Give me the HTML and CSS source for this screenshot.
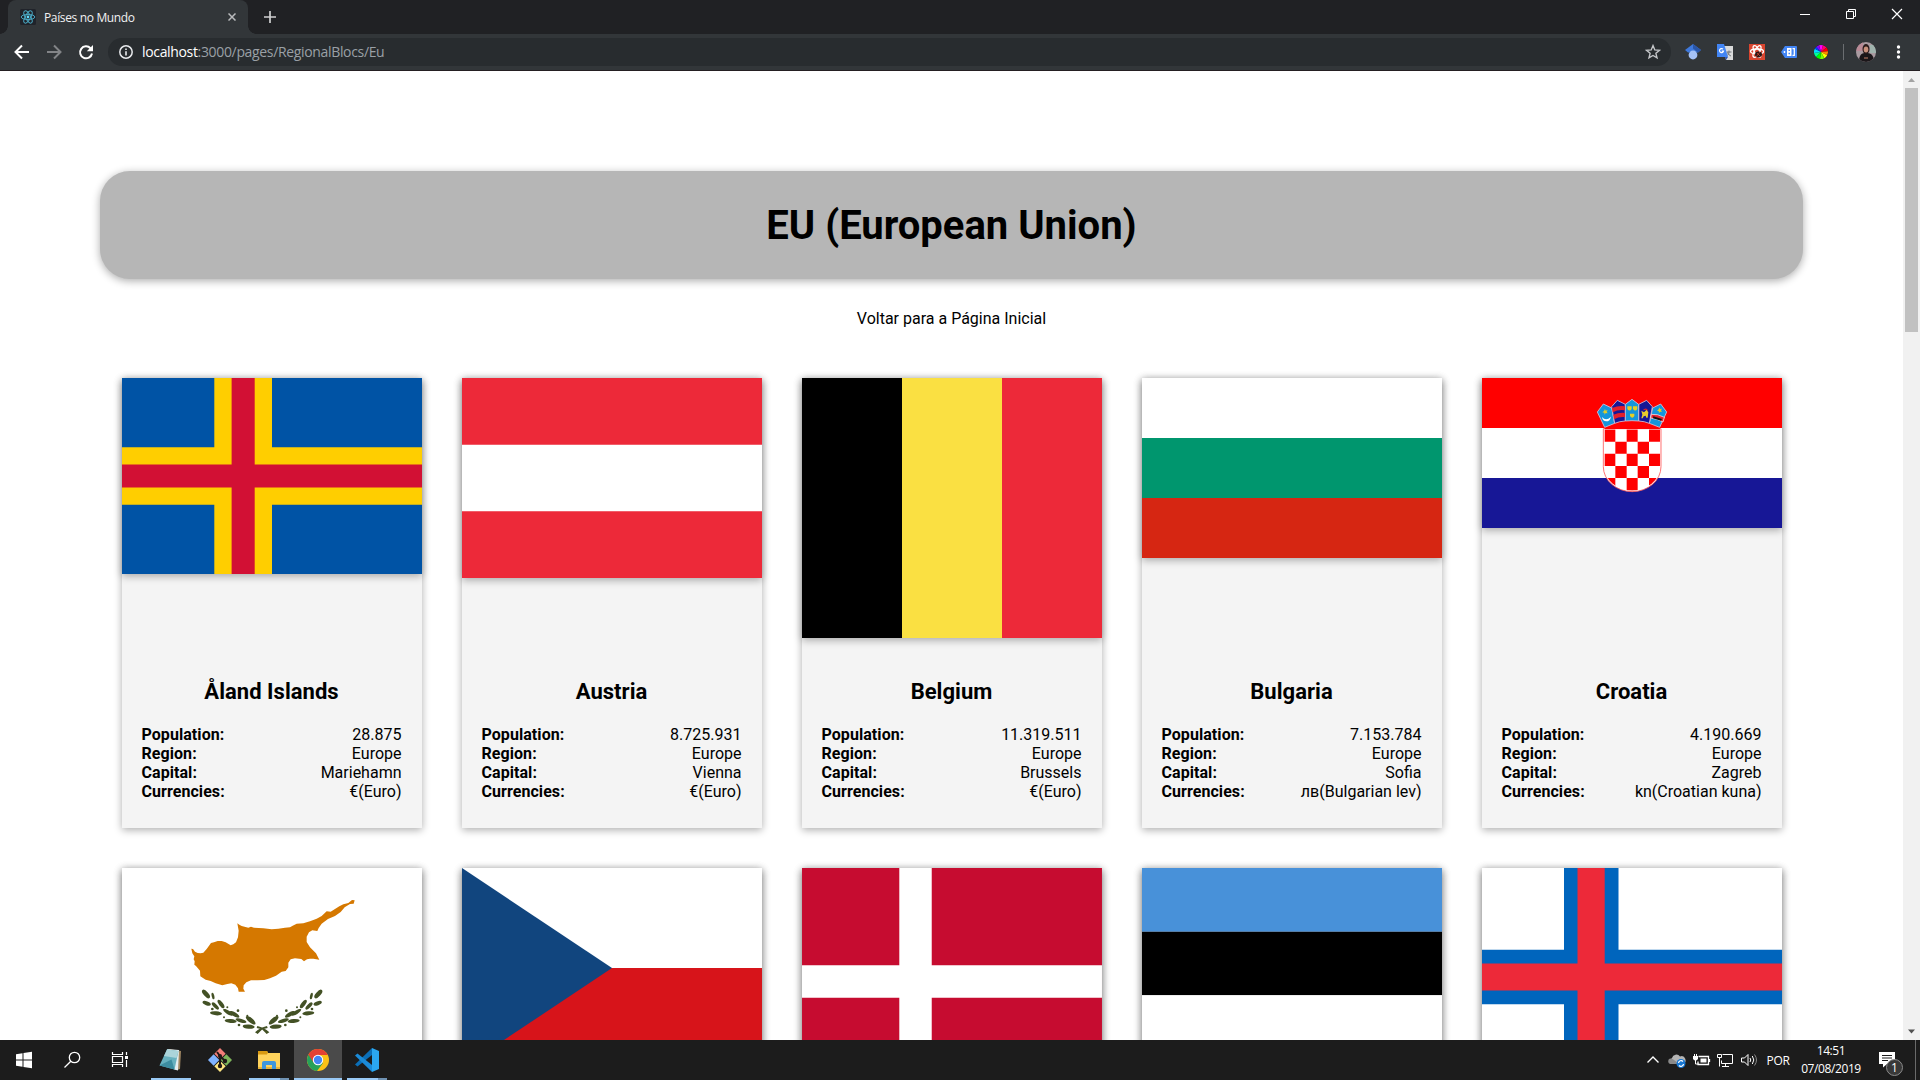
FILE: index.html
```html
<!DOCTYPE html>
<html lang="pt">
<head>
<meta charset="utf-8">
<title>Países no Mundo</title>
<link rel="stylesheet" href="styles.css">
</head>
<body>
<header class="tabstrip">
  <div class="tab">
    <svg class="favicon" width="16" height="16" viewBox="0 0 16 16"><rect width="16" height="16" rx="1.5" fill="#20232a"/><g fill="none" stroke="#4aa9c4" stroke-width="1"><ellipse cx="8" cy="8" rx="6.8" ry="2.6"/><ellipse cx="8" cy="8" rx="6.8" ry="2.6" transform="rotate(60 8 8)"/><ellipse cx="8" cy="8" rx="6.8" ry="2.6" transform="rotate(120 8 8)"/></g><circle cx="8" cy="8" r="1.4" fill="#61dafb"/></svg>
    <span class="tab-title">Países no Mundo</span>
    <svg class="tab-close" width="8" height="8" viewBox="0 0 8 8"><path d="M.5.5l7 7M7.500.5l-7 7" stroke="#b9bbbd" stroke-width="1.5"/></svg>
  </div>
  <svg class="new-tab" width="12" height="12" viewBox="0 0 12 12"><path d="M6 0v12M0 6h12" stroke="#cfd0d1" stroke-width="1.7"/></svg>
  <div class="window-controls">
    <svg width="46" height="28" viewBox="0 0 46 28"><path d="M18 14.500h10" stroke="#fff"/></svg>
    <svg width="46" height="28" viewBox="0 0 46 28"><path d="M18.500 11.500h7v7h-7zM20.500 11.500v-2h7v7h-2" fill="none" stroke="#fff"/></svg>
    <svg width="46" height="28" viewBox="0 0 46 28"><path d="M18 9l10 10M28 9L18 19" stroke="#fff" stroke-width="1.200"/></svg>
  </div>
</header>
<nav class="toolbar">
  <svg width="32" height="28" viewBox="0 0 32 28"><path d="M23 14H10M16 7.500L9.500 14l6.500 6.500" fill="none" stroke="#fff" stroke-width="2"/></svg>
  <svg width="32" height="28" viewBox="0 0 32 28"><path d="M9 14h13M16 7.500l6.500 6.500-6.500 6.500" fill="none" stroke="#828487" stroke-width="2"/></svg>
  <svg width="32" height="28" viewBox="0 0 32 28"><path d="M20.500 10.200A6 6 0 1 0 22 15.500" fill="none" stroke="#fff" stroke-width="2"/><path d="M23 7v6.200h-6.200z" fill="#fff"/></svg>
  <div class="omnibox">
    <svg width="14" height="14" viewBox="0 0 14 14"><circle cx="7" cy="7" r="6.200" fill="none" stroke="#e8eaed" stroke-width="1.500"/><path d="M7 6.200v4.300M7 3.500v1.600" stroke="#e8eaed" stroke-width="1.600"/></svg>
    <span class="url"><b>localhost</b>:3000/pages/RegionalBlocs/Eu</span>
    <svg class="star" width="16" height="16" viewBox="0 0 16 16"><path d="M8 1.600l1.800 4.300 4.700.4-3.600 3 1.100 4.600L8 11.500l-4 2.400 1.100-4.600-3.600-3 4.700-.4z" fill="none" stroke="#c4c6c9" stroke-width="1.400"/></svg>
  </div>
  <div class="extensions">
    <svg width="16" height="16" viewBox="0 0 16 16"><path d="M8 0l8 6-3 2.500H3L0 6z" fill="#3f79dc"/><path d="M8 0l8 6-3 2.500-5-4z" fill="#2a56a8"/><circle cx="8" cy="11" r="4.400" fill="#a5c2f7"/></svg>
    <svg width="16" height="16" viewBox="0 0 16 16"><path d="M6 2h10v14H9z" fill="#d9dadb"/><path d="M9.500 8h5M12 6.500V8c0 2-1.500 3.500-2.500 4M10.500 8.500c.5 2 2.500 3 3.500 3.500" stroke="#6e7378" fill="none"/><path d="M0 0h7l4 13H0z" fill="#4285f4"/><path d="M8 13h3l-2 3z" fill="#2c55b5"/><path d="M6 5.200A2 2 0 1 0 6.500 7H4.700" fill="none" stroke="#fff" stroke-width="1.200"/></svg>
    <svg width="16" height="16" viewBox="0 0 16 16"><rect width="16" height="16" fill="#d9452f"/><g fill="none" stroke="#fff" stroke-width="1.300"><ellipse cx="8" cy="7.500" rx="6.500" ry="2.500"/><ellipse cx="8" cy="7.500" rx="6.500" ry="2.500" transform="rotate(60 8 7.500)"/><ellipse cx="8" cy="7.500" rx="6.500" ry="2.500" transform="rotate(120 8 7.500)"/></g><ellipse cx="9.500" cy="10.500" rx="3.500" ry="3" fill="#2a1614"/><path d="M8 9l4 4M11 8l-4 5" stroke="#d9452f" stroke-width=".7"/></svg>
    <svg width="16" height="16" viewBox="0 0 16 16"><path d="M0 8l4-6h11q1 0 1 1v10q0 1-1 1H4z" fill="#4285f4"/><path d="M6 4h4.500v8H6z" fill="#fff"/><path d="M7.500 5.700H9v1.400H7.500zM7.500 8.700H9v1.500H7.500z" fill="#4285f4"/><path d="M11.500 4.700h1.800v6.600h-1.800" fill="none" stroke="#fff" stroke-width="1.300"/><circle cx="3.500" cy="8" r=".9" fill="#fff"/></svg>
    <svg width="16" height="16" viewBox="-8 -8 16 16"><circle r="7.200" fill="#15171a"/><path d="M0 0L-2-6.800A7 7 0 0 1 2-6.800z" fill="#f0f"/><path d="M0 0L2-6.800A7 7 0 0 1 5.500-4.400z" fill="#f07"/><path d="M0 0L5.500-4.400A7 7 0 0 1 7-.7z" fill="#f00"/><path d="M0 0L7-.7A7 7 0 0 1 6.200 3.300z" fill="#f80"/><path d="M0 0L6.200 3.300A7 7 0 0 1 3.300 6.200z" fill="#ff0"/><path d="M0 0L3.300 6.200A7 7 0 0 1-1 7z" fill="#7f0"/><path d="M0 0L-1 7A7 7 0 0 1-5 5z" fill="#0f0"/><path d="M0 0L-5 5A7 7 0 0 1-7 1z" fill="#0f9"/><path d="M0 0L-7 1A7 7 0 0 1-6.200-3.300z" fill="#0df"/><path d="M0 0L-6.200-3.300A7 7 0 0 1-4.700-5.200z" fill="#04f"/><path d="M0 0L-4.700-5.200A7 7 0 0 1-2-6.800z" fill="#80f"/></svg>
  </div>
  <span class="divider"></span>
  <svg class="avatar" width="20" height="20" viewBox="0 0 20 20"><defs><clipPath id="round"><circle cx="10" cy="10" r="10"/></clipPath></defs><g clip-path="url(#round)"><path d="M0 0h20v20H0z" fill="#a99aa0"/><path d="M0 0h7v9H0z" fill="#b98a96"/><path d="M14 3h6v8h-6z" fill="#9fb3ad"/><path d="M3 20c0-8 3-9 7-9s8 1 8 9z" fill="#1b1619"/><ellipse cx="10" cy="7" rx="3.500" ry="5" fill="#2a1a1a"/><ellipse cx="10" cy="7.500" rx="2.300" ry="3" fill="#c9917c"/><path d="M8 15h4v2H8z" fill="#6f4a40"/></g></svg>
  <svg width="20" height="20" viewBox="0 0 20 20" fill="#fff"><circle cx="10.500" cy="5" r="1.700"/><circle cx="10.500" cy="10" r="1.700"/><circle cx="10.500" cy="15" r="1.700"/></svg>
</nav>
<div class="viewport">
  <main class="page">
    <h1 class="title">EU (European Union)</h1>
    <a class="back">Voltar para a Página Inicial</a>
    <section class="cards">
      <article class="card">
        <svg class="flag" width="300" height="196" viewBox="0 0 26 17" preserveAspectRatio="none"><path fill="#0053a5" d="M0 0h26v17H0z"/><path fill="#ffce00" d="M8 0h5v17H8zM0 6h26v5H0z"/><path fill="#d21034" d="M9.500 0h2v17h-2zM0 7.500h26v2H0z"/></svg>
        <div class="info"><h2>Åland Islands</h2><dl><dt>Population:</dt><dd>28.875</dd><dt>Region:</dt><dd>Europe</dd><dt>Capital:</dt><dd>Mariehamn</dd><dt>Currencies:</dt><dd>€(Euro)</dd></dl></div>
      </article>
      <article class="card">
        <svg class="flag" width="300" height="200" viewBox="0 0 3 3" preserveAspectRatio="none"><path fill="#ed2939" d="M0 0h3v3H0z"/><path fill="#fff" d="M0 1h3v1H0z"/></svg>
        <div class="info"><h2>Austria</h2><dl><dt>Population:</dt><dd>8.725.931</dd><dt>Region:</dt><dd>Europe</dd><dt>Capital:</dt><dd>Vienna</dd><dt>Currencies:</dt><dd>€(Euro)</dd></dl></div>
      </article>
      <article class="card">
        <svg class="flag" width="300" height="260" viewBox="0 0 3 3" preserveAspectRatio="none"><path d="M0 0h1v3H0z"/><path fill="#fae042" d="M1 0h1v3H1z"/><path fill="#ed2939" d="M2 0h1v3H2z"/></svg>
        <div class="info"><h2>Belgium</h2><dl><dt>Population:</dt><dd>11.319.511</dd><dt>Region:</dt><dd>Europe</dd><dt>Capital:</dt><dd>Brussels</dd><dt>Currencies:</dt><dd>€(Euro)</dd></dl></div>
      </article>
      <article class="card">
        <svg class="flag" width="300" height="180" viewBox="0 0 3 3" preserveAspectRatio="none"><path fill="#fff" d="M0 0h3v1H0z"/><path fill="#00966e" d="M0 1h3v1H0z"/><path fill="#d62612" d="M0 2h3v1H0z"/></svg>
        <div class="info"><h2>Bulgaria</h2><dl><dt>Population:</dt><dd>7.153.784</dd><dt>Region:</dt><dd>Europe</dd><dt>Capital:</dt><dd>Sofia</dd><dt>Currencies:</dt><dd>лв(Bulgarian lev)</dd></dl></div>
      </article>
      <article class="card">
        <svg class="flag" width="300" height="150" viewBox="0 0 300 150"><path fill="red" d="M0 0h300v50H0z"/><path fill="#fff" d="M0 50h300v50H0z"/><path fill="#171796" d="M0 100h300v50H0z"/>
          <defs><clipPath id="shield"><path d="M133 178h167v111a83.500 73 0 0 1-167 0z"/></clipPath></defs>
          <g transform="translate(78 -8) scale(.33333)">
            <path d="M130 176h173v114a86.500 75 0 0 1-173 0z" fill="#fff" stroke="#f55" stroke-width="2.500"/>
            <g clip-path="url(#shield)"><path fill="red" d="M133 178h33v37h-33zM200 178h33v37h-33zM267 178h33v37h-33zM166 215h34v36h-34zM233 215h34v36h-34zM133 251h33v37h-33zM200 251h33v37h-33zM267 251h33v37h-33zM166 288h34v36h-34zM233 288h34v36h-34zM133 324h33v38h-33zM200 324h33v38h-33zM267 324h33v38h-33z"/></g>
            <path d="M133 172q83-33 168 0l-2 5H134z" fill="red"/>
            <g stroke="#d3c4dc" stroke-width="2.500" stroke-linejoin="round">
              <path d="M112 126l18-24 25 12 9 46-30 12z" fill="#1596dc"/>
              <path d="M320 126l-18-24-24 12-10 46 31 12z" fill="#1596dc"/>
              <path d="M155 110l17-19 24 12v50q-18 1-32 7z" fill="#171796"/>
              <path d="M277 110l-17-19-24 12v50q18 1 32 7z" fill="#171796"/>
              <path d="M196 103l20-15 20 15v50q-20-2-40 0z" fill="#1596dc"/>
            </g>
            <path d="M156 114q20-8 39-5v12q-20-3-37 6zM160 134q18-7 35-5v12q-18-2-33 7z" fill="#e3202c"/>
            <path d="M135 117l2 5 6-2-3 5 3 5-6-1-3 5-1-6-6-1 5-4zM298 112l2 5 6-1-3 5 3 4-6 0-3 4-1-6-5-1 5-4zM202 109h13v8q-6 9-13 0zM219 109h13v8q-6 9-13 0zM210 131h13v7q-6 10-13 0z" fill="#e5cf25"/>
            <path d="M126 141q12 14 27-1-3 14-14 14t-13-13z" fill="#fff"/>
            <path d="M244 122l8 5 8-8 5 8-2 16h-4l-2-6-6 2-3 6h-4l3-11z" fill="#e9cb2e"/><path d="M248 121q10-12 17 1l-7-3z" fill="#e3202c"/>
            <path d="M274 133q18-2 39 9l-4 14q-16-9-37-12z" fill="#e3202c" stroke="#fff" stroke-width="2"/><path d="M280 139l26 8-3 5-24-7z" fill="#111"/>
          </g></svg>
        <div class="info"><h2>Croatia</h2><dl><dt>Population:</dt><dd>4.190.669</dd><dt>Region:</dt><dd>Europe</dd><dt>Capital:</dt><dd>Zagreb</dd><dt>Currencies:</dt><dd>kn(Croatian kuna)</dd></dl></div>
      </article>
      <article class="card">
        <svg class="flag" width="300" height="180" viewBox="0 0 300 180"><path fill="#fff" d="M0 0h300v180H0z"/>
          <defs><g id="branch" fill="#435125"><ellipse cx="108" cy="402" rx="16" ry="7" transform="rotate(48 108 402)"/><ellipse cx="129" cy="408" rx="10" ry="4" transform="rotate(78 129 408)"/><ellipse cx="110" cy="430" rx="13" ry="6" transform="rotate(20 110 430)"/><ellipse cx="136" cy="438" rx="14" ry="5.500" transform="rotate(45 136 438)"/><ellipse cx="153" cy="432" rx="15" ry="6" transform="rotate(53 153 432)"/><ellipse cx="138" cy="460" rx="18" ry="6" transform="rotate(5 138 460)"/><ellipse cx="174" cy="457" rx="17" ry="5.500" transform="rotate(32 174 457)"/><ellipse cx="193" cy="463" rx="17" ry="6" transform="rotate(30 193 463)"/><ellipse cx="182" cy="483" rx="18" ry="6" transform="rotate(4 182 483)"/><ellipse cx="213" cy="482" rx="17" ry="5.500" transform="rotate(16 213 482)"/><ellipse cx="242" cy="481" rx="18" ry="7" transform="rotate(40 242 481)"/><ellipse cx="236" cy="500" rx="18" ry="6.500" transform="rotate(4 236 500)"/><circle cx="127" cy="447" r="4"/><circle cx="162" cy="472" r="3"/><circle cx="172" cy="442" r="3"/><circle cx="207" cy="495" r="4"/><circle cx="204" cy="452" r="4"/><circle cx="232" cy="467" r="3"/><path d="M262 498q20 4 36 19l-8 5-14-14-16-4z"/></g></defs>
          <g transform="translate(48 -8) scale(.33333)">
            <path fill="#d57800" d="M64 266L69 267 75 275 83 279 92 280 100 278 110 267 123 249 132 247 143 243 155 243 167 247 182 256 190 253 198 247 204 232 206 212 202 190 208 194 215 198 235 203 243 200 252 203 280 205 305 208 325 206 345 203 360 202 368 197 380 191 400 190 420 184 440 176 455 168 470 154 482 155 495 147 508 139 520 133 535 129 546 120 554 121 551 131 540 132 524 142 512 156 495 168 474 177 455 191 446 204 442 213 427 211 417 217 410 230 410 246 420 262 438 280 448 299 430 296 420 296 411 298 402 304 394 297 375 295 362 298 355 308 355 322 347 333 335 335 318 347 300 355 283 360 262 361 243 361 229 367 221 376 220 386 225 395 206 395 204 385 196 374 184 370 172 372 157 376 137 370 122 363 107 359 91 349 90 332 78 318 73 314 74 304 71 298 73 289 67 280z"/>
            <use href="#branch"/><use href="#branch" transform="matrix(-1 0 0 1 553 0)"/>
          </g></svg>
      </article>
      <article class="card">
        <svg class="flag" width="300" height="200" viewBox="0 0 300 200"><path fill="#fff" d="M0 0h300v100H0z"/><path fill="#d7141a" d="M0 100h300v100H0z"/><path fill="#11457e" d="M0 0l150 100L0 200z"/></svg>
      </article>
      <article class="card">
        <svg class="flag" width="300" height="227" viewBox="0 0 37 28"><path fill="#c60c30" d="M0 0h37v28H0z"/><path fill="#fff" d="M12 0h4v28h-4zM0 12h37v4H0z"/></svg>
      </article>
      <article class="card">
        <svg class="flag" width="300" height="191" viewBox="0 0 3 3" preserveAspectRatio="none"><path fill="#4891d9" d="M0 0h3v1H0z"/><path d="M0 1h3v1H0z"/><path fill="#fff" d="M0 2h3v1H0z"/></svg>
      </article>
      <article class="card">
        <svg class="flag" width="300" height="218" viewBox="0 0 300 218"><path fill="#fff" d="M0 0h300v218H0z"/><path fill="#0065bd" d="M82 0h54.500v218H82zM0 81.800h300v54.500H0z"/><path fill="#ed2939" d="M95.500 0h27.200v218H95.500zM0 95.400h300v27.200H0z"/></svg>
      </article>
    </section>
  </main>
  <div class="scrollbar">
    <svg width="17" height="17" viewBox="0 0 17 17"><path d="M5 11l3.500-4 3.500 4z" fill="#a3a3a3"/></svg>
    <span class="thumb"></span>
    <svg class="down" width="17" height="17" viewBox="0 0 17 17"><path d="M5 6.500l3.500 4 3.500-4z" fill="#505050"/></svg>
  </div>
</div>
<footer class="taskbar">
  <div class="start">
    <svg width="48" height="40" viewBox="0 0 48 40"><path fill="#fff" d="M16 14.200l6.500-1v6.300H16zM23.500 13l8.500-1.200v7.700h-8.500zM16 20.500h6.500v6.300l-6.500-1zM23.500 20.500H32v7.700L23.500 27z"/></svg>
    <svg width="48" height="40" viewBox="0 0 48 40" fill="none" stroke="#fff" stroke-width="1.300"><circle cx="26.500" cy="17.500" r="5.200"/><path d="M22.800 21.300L16.500 27.500"/></svg>
    <svg width="48" height="40" viewBox="0 0 48 40" fill="none" stroke="#fff"><path d="M16.500 12v2.500h10V12M16.500 27v-2.500h10V27M16.500 16.500h10v6h-10zM30.500 12v3M30.500 20v7" stroke-width="1.200"/><path d="M29 16h3v3h-3z" fill="#fff" stroke="none"/></svg>
  </div>
  <div class="apps">
    <div class="app open"><svg width="48" height="40" viewBox="0 0 48 40"><path d="M21 9l13 2-1 18-3 1z" fill="#a08763"/><path d="M20 9l12 1-1 20.500-4-1z" fill="#e6eef0"/><path d="M20 9.500l11.500 1.500-4 18.500-15-4z" fill="#68b1bf"/><path d="M20 9.500l11.500 1.500-2 7-12.500-2z" fill="#abd4da"/><path d="M27.500 29.500l-15-4 12-6z" fill="#3d8da0"/></svg></div>
    <div class="app"><svg width="48" height="40" viewBox="0 0 48 40"><g transform="rotate(45 24 20)"><path fill="#f27d78" d="M15.500 11.500h8v8h-8z"/><path fill="#7db55b" d="M24.500 11.500h8v8h-8z"/><path fill="#80b3ff" d="M15.500 20.500h8v8h-8z"/><path fill="#ffe680" d="M24.500 20.500h8v8h-8z"/></g><path d="M21 12l3 4v10M24 16l5 5" fill="none" stroke="#201818" stroke-width="2"/><circle cx="24" cy="16" r="2" fill="#201818"/><circle cx="24" cy="26" r="2.200" fill="#201818"/><circle cx="29" cy="21" r="2.200" fill="#201818"/></svg></div>
    <div class="app open many"><svg width="48" height="40" viewBox="0 0 48 40"><path d="M13 11h9l1 2h12v15H13z" fill="#ffd35c"/><path d="M13 11h9l1 1.500-1 2h-9z" fill="#d99a12"/><path d="M13 27h22v2H13z" fill="#e9b43c"/><path d="M17 29v-6q0-2 2-2h10q2 0 2 2v6h-4v-4h-6v4z" fill="#3f96dd"/></svg></div>
    <div class="app open active"><svg width="48" height="40" viewBox="0 0 48 40"><circle cx="24" cy="20" r="11" fill="#fbc116"/><path d="M24 20L14.500 14.500A11 11 0 0 0 23 31l6-8z" fill="#26a15a"/><path d="M24 20v-5h9.800A11 11 0 0 0 14.300 14.600L19.500 22.500z" fill="#e34133"/><circle cx="24" cy="20" r="5.200" fill="#fff"/><circle cx="24" cy="20" r="4.200" fill="#4285f4"/></svg></div>
    <div class="app open many"><svg width="48" height="40" viewBox="0 0 48 40"><path d="M29 8l7 3v18l-7 3z" fill="#2ba7f0"/><path d="M29 8v7L14.500 26.500 12 24.500z" fill="#0b6fb8"/><path d="M29 32v-7L14.500 13.500 12 15.500z" fill="#1b8bd8"/></svg></div>
  </div>
  <div class="tray">
    <svg width="24" height="40" viewBox="0 0 24 40"><path d="M6.500 22.500L12 17l5.500 5.500" fill="none" stroke="#fff" stroke-width="1.400"/></svg>
    <svg width="24" height="40" viewBox="0 0 24 40"><path d="M7 24a3.500 3.500 0 0 1 0-6A4.500 4.500 0 0 1 15 16.500a4 4 0 0 1 3 7.500z" fill="#b4b4b4"/><path d="M5 24a3 3 0 0 1 0-5.500q4 0 8 5.500z" fill="#8a8a8a"/><circle cx="16" cy="23.500" r="4.500" fill="#1676d2"/><path d="M13.500 23a2.600 2.600 0 0 1 4.500-1.500M18.500 24a2.600 2.600 0 0 1-4.500 1.500" stroke="#fff" fill="none" stroke-width="1.200"/></svg>
    <svg width="24" height="40" viewBox="0 0 24 40"><path d="M9.500 16.500h10v8H9v-3M20.500 19v3" fill="none" stroke="#fff" stroke-width="1.300"/><path d="M11.500 18.500h6v4h-6zM4 16h5v3q-2.500 3-5 0z" fill="#fff"/><path d="M5.500 14v2M7.500 14v2M6.500 20v4h3" stroke="#fff" fill="none"/></svg>
    <svg width="24" height="40" viewBox="0 0 24 40"><path d="M9.500 14.500h10v9h-11v-3M12.500 24v3M9 26.500h7" fill="none" stroke="#fff"/><path d="M4.500 14.500h4v3h-4zM6.500 17.500v9" stroke="#fff" fill="none"/></svg>
    <svg width="24" height="40" viewBox="0 0 24 40" fill="none" stroke="#fff"><path d="M4.500 18h3l3.500-3.500v11L7.500 22h-3z"/><path d="M13 18q1.500 2 0 4M15.300 16q3 4 0 8"/><path d="M17.500 14.500q4 5.500 0 11" stroke="#888"/></svg>
    <span class="lang">POR</span>
    <span class="clock"><span>14:51</span><span>07/08/2019</span></span>
    <div class="notice"><svg width="18" height="16" viewBox="0 0 18 16"><path d="M1 0h16v12H9l-4 3.500V12H1z" fill="#fff"/><path d="M4 3.500h10M4 6h10M4 8.500h6" stroke="#1c1c1c"/></svg><span class="count">1</span></div>
  </div>
</footer>
</body>
</html>
```
FILE: styles.css
```css
* { box-sizing: border-box; }
body { margin: 0; width: 1920px; height: 1080px; overflow: hidden; display: flex; flex-direction: column; background: #fff; color: #000; font-family: Roboto, sans-serif; }
svg { display: block; flex: none; }

.tabstrip { height: 34px; flex: none; display: flex; background: #202124; padding-left: 8px; font-family: "Open Sans", sans-serif; }
.tab { position: relative; width: 240px; display: flex; align-items: center; padding: 0 12px; background: #323639; border-radius: 8px 8px 0 0; }
.tab::before, .tab::after { content: ""; position: absolute; bottom: 0; width: 8px; height: 8px; }
.tab::before { left: -8px; background: radial-gradient(circle at 0 0, transparent 7.5px, #323639 8px); }
.tab::after { right: -8px; background: radial-gradient(circle at 100% 0, transparent 7.5px, #323639 8px); }
.tab-title { margin-left: 8px; font-size: 12px; letter-spacing: -.35px; color: #f1f1f2; }
.tab-close { margin-left: auto; }
.new-tab { margin: 11px 0 0 16px; }
.window-controls { margin-left: auto; display: flex; }

.toolbar { height: 37px; flex: none; display: flex; align-items: center; padding: 0 12px 1px 6px; background: #323639; border-bottom: 1px solid #241f22; font-family: "Open Sans", sans-serif; }
.omnibox { flex: 1; height: 28px; margin-left: 6px; display: flex; align-items: center; padding: 0 10px 0 11px; border-radius: 14px; background: #282c2f; }
.url { margin-left: 9px; font-size: 14px; letter-spacing: -.34px; color: #9aa0a6; white-space: nowrap; }
.url b { font-weight: 400; color: #fff; }
.star { margin-left: auto; }
.extensions { display: flex; gap: 16px; margin-left: 14px; }
.divider { width: 1px; height: 16px; margin: 0 12px 0 14px; background: #6b6e71; }
.avatar { margin-right: 12px; }

.viewport { height: 969px; flex: none; display: flex; overflow: hidden; }
.page { width: 1903px; padding: 100px; }
.title { margin: 0; height: 108px; display: flex; align-items: center; justify-content: center; border-radius: 30px; background: #b6b6b6; box-shadow: 0 2px 8px rgba(0, 0, 0, .33); font-size: 40px; font-weight: 700; }
.back { display: block; margin-top: 30px; text-align: center; font-size: 16px; line-height: 19px; }
.cards { display: flex; flex-wrap: wrap; justify-content: center; gap: 40px; margin-top: 50px; }
.card { width: 300px; height: 450px; display: flex; flex-direction: column; background: #f4f4f4; box-shadow: 0 2px 8px rgba(0, 0, 0, .33); }
.flag { box-shadow: 0 2px 8px rgba(0, 0, 0, .33); }
.info { margin-top: auto; padding: 0 20px 27px; }
.info h2 { margin: 0 0 20px; text-align: center; font-size: 22px; line-height: 26px; letter-spacing: .03px; }
.info dl { margin: 0; display: grid; grid-template-columns: auto auto; justify-content: space-between; font-size: 16px; line-height: 19px; }
.info dt { font-weight: 700; letter-spacing: .06px; }
.info dd { margin: 0; text-align: right; }

.scrollbar { width: 17px; display: flex; flex-direction: column; align-items: center; background: #f1f1f1; }
.thumb { width: 13px; height: 244px; background: #c1c1c1; }
.down { margin-top: auto; }

.taskbar { height: 40px; flex: none; display: flex; background: #1c1c1c; color: #fff; font: 12px "Open Sans", sans-serif; }
.start { display: flex; margin-right: 3px; }
.apps { display: flex; gap: 1px; }
.app { position: relative; width: 48px; }
.open::after { content: ""; position: absolute; left: 4px; right: 4px; bottom: 0; height: 2px; background: #99c9f5; }
.many::after { background: linear-gradient(90deg, #99c9f5 31px, #6f92b2 31px); }
.active { background: #4a4a4a; }
.active::after { left: 0; right: 0; }
.tray { margin-left: auto; display: flex; align-items: center; padding-right: 4px; }
.lang { width: 34px; text-align: center; letter-spacing: -.3px; }
.clock { width: 72px; display: flex; flex-direction: column; align-items: center; line-height: 18px; letter-spacing: -.4px; padding-bottom: 1px; }
.notice { position: relative; width: 49px; height: 40px; padding: 12px 0 0 11px; border-right: 1px solid #6a6a6a; }
.count { position: absolute; left: 19px; top: 19px; width: 17px; height: 17px; border: 1px solid #8b8b8b; border-radius: 50%; background: #383838; text-align: center; line-height: 15px; }
```
